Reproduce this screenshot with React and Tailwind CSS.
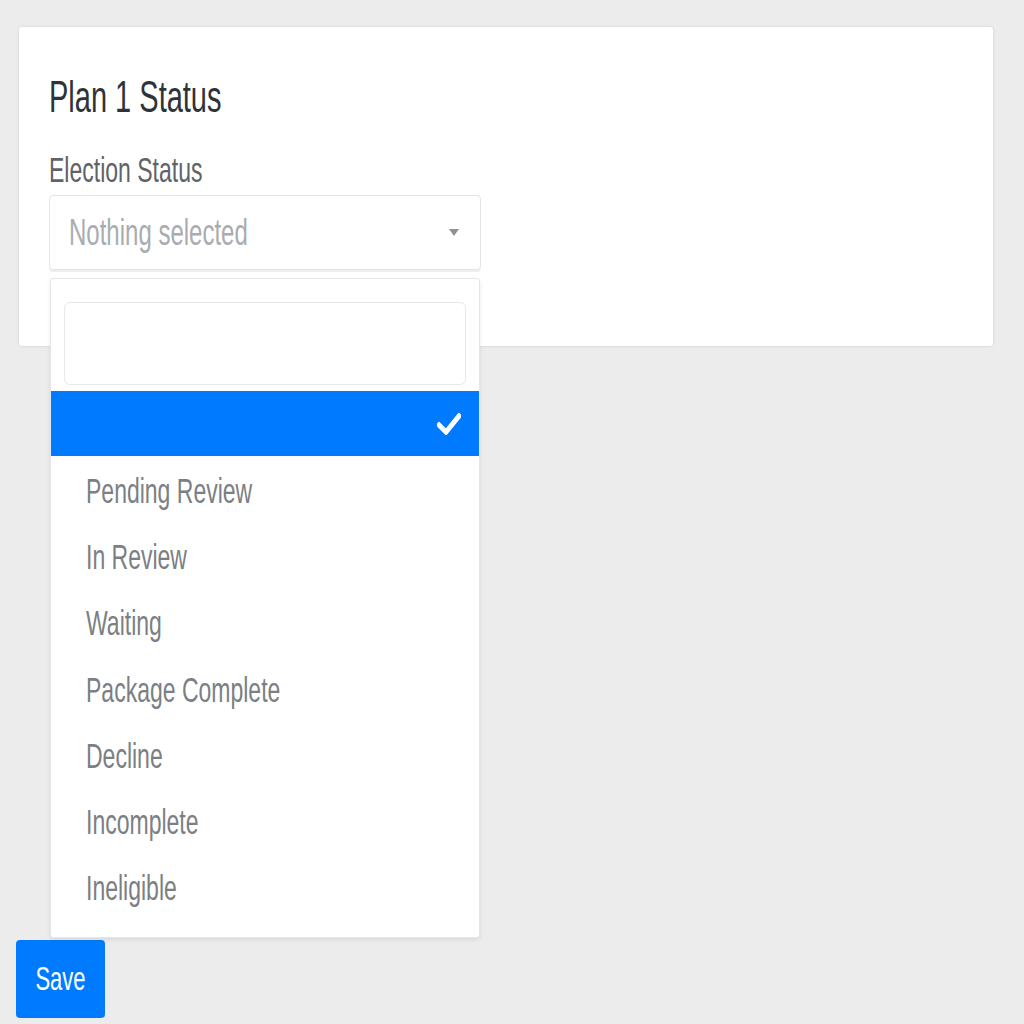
import { useState } from "react"

const statuses = ["Pending Review", "In Review", "Waiting", "Package Complete", "Decline", "Incomplete", "Ineligible"]

function Tall({ children, className = "" }) {
  return <span className={`inline-block origin-center scale-y-150 ${className}`}>{children}</span>
}

export default function App() {
  const [query, setQuery] = useState("")

  return (
    <div className="min-h-screen bg-[#ececec] pt-[27px] font-['Liberation_Sans',Arial,sans-serif]">
      <div className="ml-[19px] h-[319px] w-[974px] rounded-[3px] bg-white pl-[30px] pt-[49px] shadow-[0_0_3px_rgba(0,0,0,0.12)]">
        <h2 className="flex h-[42px] items-center text-[29px] leading-none text-[#2f3338]">
          <Tall>Plan 1 Status</Tall>
        </h2>
        <label className="mt-[36px] flex h-[32px] items-center text-[23px] leading-none text-[#5f6368]">
          <Tall>Election Status</Tall>
        </label>
        <div className="relative mt-[9px] w-[432px]">
          <div className="flex h-[75px] items-center justify-between rounded-[4px] border border-[#e2e4e8] pl-[19px] pr-[21px] shadow-[0_2px_0_#eceef1]">
            <Tall className="text-[24px] leading-none text-[#a9acb0]">Nothing selected</Tall>
            <span className="h-0 w-0 border-x-[5px] border-t-[7px] border-x-transparent border-t-[#8e9196]" />
          </div>
          <div className="absolute left-[1px] top-[83px] z-10 w-[430px] rounded-[3px] border border-[#e4e6ea] bg-white pb-[17px] pt-[23px] shadow-[0_2px_4px_rgba(0,0,0,0.08)]">
            <div className="px-[13px]">
              <input
                value={query}
                onChange={(e) => setQuery(e.target.value)}
                className="h-[83px] w-full rounded-[6px] border border-[#e6e8eb] bg-white px-3 text-[22px] outline-none"
              />
            </div>
            <div className="mt-[6px] flex h-[65px] items-center justify-end bg-[#007bff] pr-[18px]">
              <svg width="24" height="22" viewBox="0 0 24 22">
                <path d="M2 12 L9 19 L22 3" fill="none" stroke="white" strokeWidth="5" strokeLinecap="square" />
              </svg>
            </div>
            {statuses.map((s) => (
              <div key={s} className="flex h-[66.3px] items-center pl-[35px] pt-[4px] text-[23px] leading-none text-[#7c7f83]">
                <Tall>{s}</Tall>
              </div>
            ))}
          </div>
        </div>
      </div>
      <button className="ml-[16px] mt-[594px] flex h-[78px] w-[89px] items-center justify-center rounded-[4px] bg-[#007bff] text-[22px] leading-none text-white">
        <Tall>Save</Tall>
      </button>
    </div>
  )
}
